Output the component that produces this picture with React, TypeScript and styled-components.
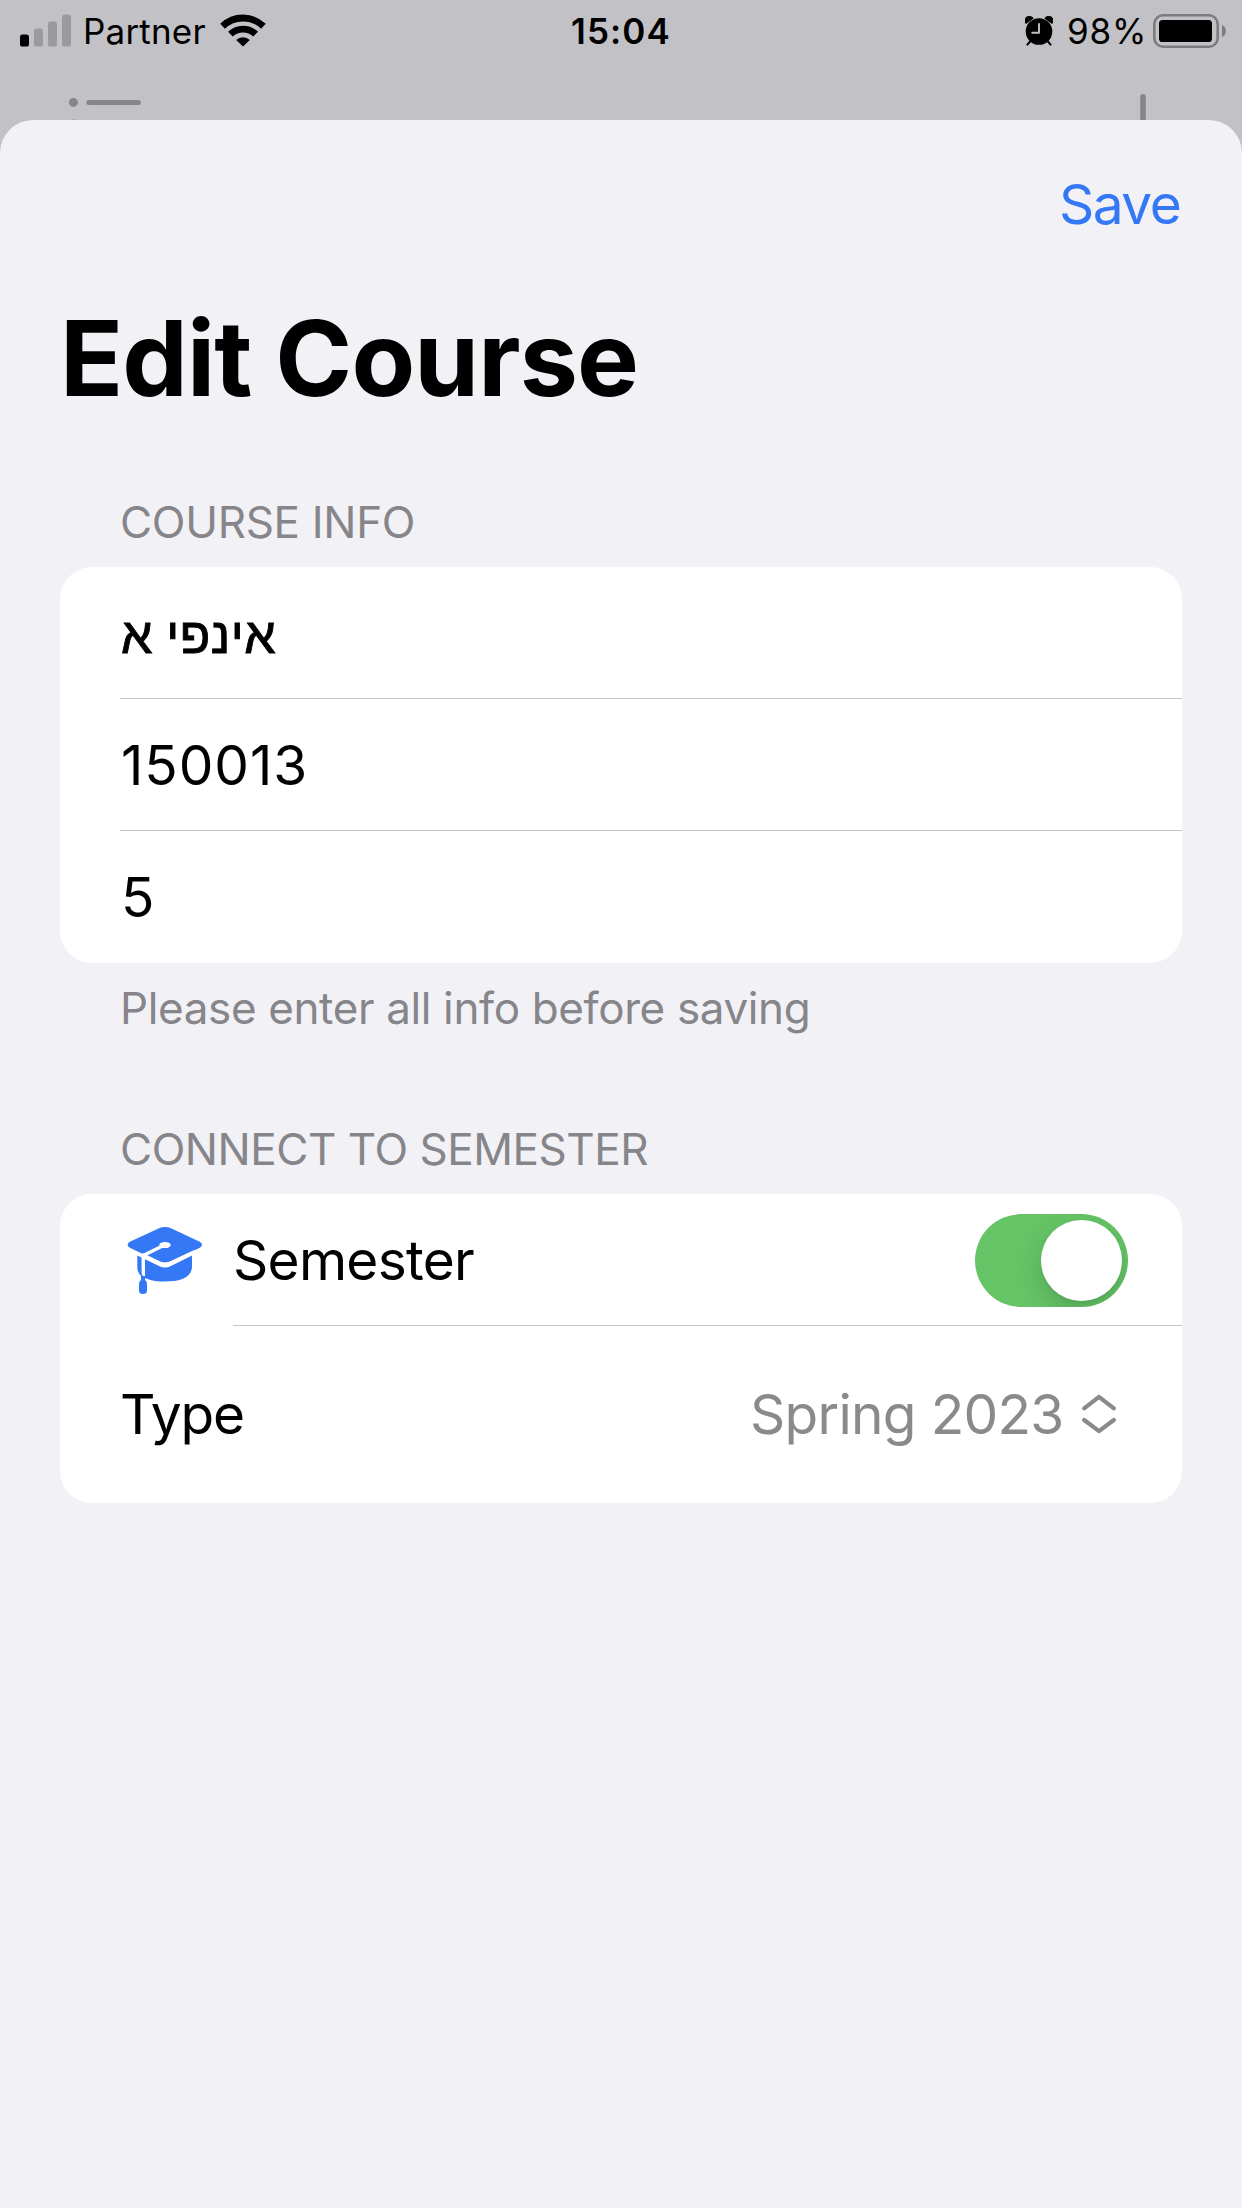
import React from "react";
import styled, { createGlobalStyle } from "styled-components";

const GlobalStyle = createGlobalStyle`
  html, body { margin: 0; padding: 0; background: #c2c1c6; }
  *, *::before, *::after { box-sizing: border-box; }
`;

const Screen = styled.div`
  width: 1242px;
  height: 2208px;
  display: flex;
  flex-direction: column;
  overflow: hidden;
  background: #c2c1c6;
  color: #000;
  font-family: Inter, "Liberation Sans", sans-serif;
  font-size: 55px;
  white-space: nowrap;
`;

const StatusBar = styled.header`
  height: 62px;
  display: grid;
  grid-template-columns: 1fr 104px 1fr;
  align-items: center;
  padding: 0 16px 0 20px;
  font-size: 35px;
  line-height: 62px;
`;

const StatusGroup = styled.div<{ $end?: boolean }>`
  display: flex;
  align-items: center;
  height: 62px;
  justify-content: ${(p) => (p.$end ? "flex-end" : "flex-start")};
`;

const Carrier = styled.span`
  margin-left: 11px;
  width: 137px;
  letter-spacing: 0.2px;
`;

const Clock = styled.time`
  font-weight: 600;
  letter-spacing: 1.1px;
`;

const BatteryLevel = styled.span`
  margin: 0 8px 0 14px;
  width: 78px;
  letter-spacing: 0.8px;
`;

const Behind = styled.div`
  height: 58px;
  display: flex;
  justify-content: space-between;
  padding: 0 95px 0 68px;
`;

const Sheet = styled.main`
  flex: 1;
  border-radius: 33px 33px 0 0;
  background: #f2f1f6;
`;

const NavBar = styled.nav`
  height: 168px;
  display: flex;
  align-items: center;
  justify-content: flex-end;
  padding-right: 60px;
`;

const SaveButton = styled.button`
  width: 123px;
  padding: 0;
  border: 0;
  background: none;
  color: #3478f6;
  font: inherit;
  text-align: left;
  letter-spacing: -1.5px;
`;

const Title = styled.h1`
  margin: 0;
  padding-left: 60px;
  font-size: 104px;
  font-weight: 700;
  line-height: 140px;
  letter-spacing: -0.86px;
`;

const SectionLabel = styled.h2<{ $top: number; $spacing: number }>`
  margin: 0;
  padding: ${(p) => p.$top}px 0 18px 120px;
  font-size: 44px;
  font-weight: 400;
  line-height: 54px;
  letter-spacing: ${(p) => p.$spacing}px;
  color: #86858a;
`;

const SectionNote = styled.p`
  margin: 0;
  padding: 18px 0 0 120px;
  font-size: 44px;
  line-height: 54px;
  letter-spacing: -0.37px;
  color: #86858a;
`;

const Card = styled.section`
  margin: 0 60px;
  border-radius: 32px;
  background: #fff;
`;

const Row = styled.div<{ $height?: number; $line?: boolean; $inset?: number; $spacing?: number }>`
  height: ${(p) => p.$height ?? 132}px;
  margin-left: ${(p) => p.$inset ?? 60}px;
  display: flex;
  flex: 1;
  align-items: center;
  justify-content: space-between;
  border-bottom: ${(p) => (p.$line ? "1px solid #c6c6c8" : "0")};
  letter-spacing: ${(p) => p.$spacing ?? 0}px;
`;

const FieldValue = styled.span`
  padding-left: 1px;
`;

const IconRow = styled.div`
  display: flex;
`;

const IconCell = styled.div`
  width: 173px;
  height: 131px;
  padding: 33px 0 0 67px;
`;

const HebrewText = styled.span`
  padding: 6px 0 0 1px;
  font-family: "Liberation Sans", sans-serif;
  font-size: 50px;
  letter-spacing: 0.5px;
  word-spacing: -1px;
  -webkit-text-stroke: 0.9px #000;
`;

const Switch = styled.button`
  width: 153px;
  height: 93px;
  margin: 1px 54px 0 0;
  padding: 6px;
  display: flex;
  justify-content: flex-end;
  border: 0;
  border-radius: 47px;
  background: #65c466;
  overflow: hidden;
`;

const Knob = styled.span`
  width: 81px;
  height: 81px;
  border-radius: 50%;
  background: #fff;
  box-shadow: 0 9px 24px rgba(0, 0, 0, 0.16), 0 3px 3px rgba(0, 0, 0, 0.03);
`;

const TypeRow = styled(Row)`
  padding-bottom: 2px;
`;

const Picker = styled.div`
  display: flex;
  align-items: center;
  margin-right: 66px;
  color: #8a8a8c;
  letter-spacing: -0.7px;
`;

const PickerValue = styled.span`
  width: 332px;
`;

const Drawing = styled.svg`
  display: block;
  flex: none;
`;

const Signal = () => (
  <Drawing width="52" height="34" viewBox="0 0 52 34">
    <rect x="0" y="20.5" width="9" height="12" rx="2.6" fill="#000" />
    <g fill="#9b9b9d">
      <rect x="14" y="14.5" width="9" height="18" rx="2.6" />
      <rect x="28" y="7.5" width="9" height="25" rx="2.6" />
      <rect x="42" y="0.5" width="9" height="32" rx="2.6" />
    </g>
  </Drawing>
);

const Wifi = () => (
  <Drawing width="46" height="34" viewBox="0 0 46 34">
    <path fill="none" stroke="#000" strokeWidth="6.8" d="M2.600 12.200a29.500 29.500 0 0 1 40.800 0M10.400 20.100a18.200 18.200 0 0 1 25.200 0" />
    <path d="M23 32.600l-6.800-6.600a9.800 9.800 0 0 1 13.600 0z" />
  </Drawing>
);

const Alarm = () => (
  <Drawing width="28" height="30" viewBox="0 0 28 30">
    <circle cx="14" cy="15.5" r="13.3" />
    <path d="M1 7.2A4 4 0 0 1 7.8 2.2zM27 7.2A4 4 0 0 0 20.2 2.2z" stroke="#000" strokeWidth="1.2" strokeLinejoin="round" />
    <path d="M5.5 25L2.4 28.6M22.5 25L25.6 28.6" stroke="#000" strokeWidth="2" strokeLinecap="round" />
    <path d="M14 8v8.7H7.2" fill="none" stroke="#c2c1c6" strokeWidth="1.9" strokeLinecap="round" strokeLinejoin="round" />
  </Drawing>
);

const Battery = () => (
  <Drawing width="73" height="34" viewBox="0 0 73 34">
    <rect x="1.3" y="1.3" width="63.4" height="31.4" rx="8.8" fill="none" stroke="#7c7c7f" strokeWidth="2.6" />
    <rect x="6" y="6" width="53" height="22" rx="3.6" />
    <path d="M69 11c5 1.6 5 10.4 0 12z" fill="#7c7c7f" />
  </Drawing>
);

const ListGlyph = () => (
  <Drawing width="74" height="58" viewBox="0 0 74 58" fill="#868686">
    <circle cx="5.4" cy="40.4" r="4.5" />
    <rect x="18.3" y="38" width="54.5" height="5" rx="2.5" />
    <circle cx="5.4" cy="61.9" r="4.5" />
  </Drawing>
);

const PlusGlyph = () => (
  <Drawing width="8" height="58" viewBox="0 0 8 58">
    <rect x="1.2" y="32" width="5.6" height="40" rx="2.8" fill="#868686" />
  </Drawing>
);

const GraduationCap = () => (
  <Drawing width="76" height="70" viewBox="0 0 76 70">
    <g fill="#3478f6">
      <path d="M10.300 28.500V40C10.300 46 14 50 19 51.500C25 54 31 54.500 38 54.500C53 54.500 65 51 65 39V28.500L44 39Q38 42 32 39z" />
      <path d="M2.800 14.800L31.500 1.400Q38 -1.400 44.500 1.400L72.800 14.800Q77.200 17.700 72.800 20.700L45 34.300Q38 37.100 31 34.300L2.800 20.700Q-1.600 17.700 2.800 14.800z" />
    </g>
    <g stroke="#fff" fill="none" strokeWidth="3.400">
      <path d="M16.300 49V30.500Q16.300 28.500 18.300 27.500L37 18.300" />
      <path d="M15 27.500L32 35.800Q38 38.800 44 35.800L68 24.500" />
    </g>
    <ellipse cx="38" cy="18" rx="5.700" ry="3.100" fill="#fff" />
    <path d="M14 46Q16 50 18 50V53Q20 54 20 57V63.500Q20 67 16 67T12 63.500V57Q12 54 14 53z" fill="#3478f6" />
  </Drawing>
);

const UpDown = () => (
  <Drawing width="34" height="40" viewBox="0 0 34 40">
    <path
      d="M2.2 14.3L17 2.8L31.8 14.3M2.2 26L17 37.2L31.8 26"
      fill="none"
      stroke="#8a8a8c"
      strokeWidth="4.2"
      strokeLinecap="round"
      strokeLinejoin="round"
    />
  </Drawing>
);

export default function App() {
  return (
    <Screen>
      <GlobalStyle />
      <StatusBar>
        <StatusGroup>
          <Signal />
          <Carrier>Partner</Carrier>
          <Wifi />
        </StatusGroup>
        <Clock>15:04</Clock>
        <StatusGroup $end>
          <Alarm />
          <BatteryLevel>98%</BatteryLevel>
          <Battery />
        </StatusGroup>
      </StatusBar>
      <Behind>
        <ListGlyph />
        <PlusGlyph />
      </Behind>
      <Sheet>
        <NavBar>
          <SaveButton>Save</SaveButton>
        </NavBar>
        <Title>Edit Course</Title>
        <SectionLabel $top={67} $spacing={-0.3}>COURSE INFO</SectionLabel>
        <Card>
          <Row $line>
            <HebrewText dir="rtl">אינפי א</HebrewText>
          </Row>
          <Row $line $spacing={0.94}>
            <FieldValue>150013</FieldValue>
          </Row>
          <Row>
            <FieldValue>5</FieldValue>
          </Row>
        </Card>
        <SectionNote>Please enter all info before saving</SectionNote>
        <SectionLabel $top={87} $spacing={-0.46}>CONNECT TO SEMESTER</SectionLabel>
        <Card>
          <IconRow>
            <IconCell>
              <GraduationCap />
            </IconCell>
            <Row $line $inset={0} $spacing={-0.73}>
              Semester
              <Switch role="switch" aria-checked="true" aria-label="Semester">
                <Knob />
              </Switch>
            </Row>
          </IconRow>
          <TypeRow $height={177} $spacing={-1.2}>
            Type
            <Picker>
              <PickerValue>Spring 2023</PickerValue>
              <UpDown />
            </Picker>
          </TypeRow>
        </Card>
      </Sheet>
    </Screen>
  );
}
